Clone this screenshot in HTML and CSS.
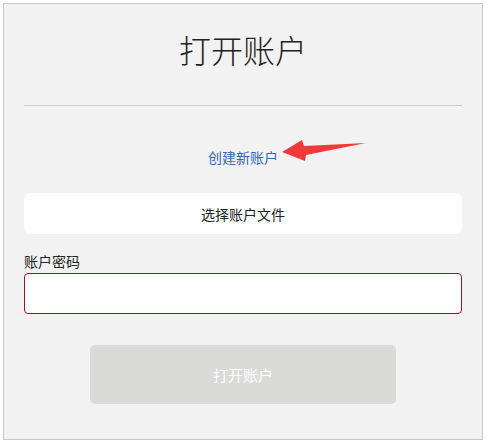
FILE: index.html
```html
<!DOCTYPE html>
<html lang="zh-CN">
<head>
  <meta charset="UTF-8" />
  <title>打开账户</title>
  <link rel="stylesheet" href="styles.css">
</head>
<body>
  <div class="panel">
    <h1 class="title">打开账户</h1>
    <hr class="divider">
    <div class="createRow">
      <a class="createLink" href="#">创建新账户</a>
      <svg class="arrow" width="90" height="26" viewBox="0 0 90 26">
        <polygon points="0,13 20,1 22,7 84,4 24,16 23,22" fill="#f03a3a" />
      </svg>
    </div>
    <button class="fileButton">选择账户文件</button>
    <label class="fieldLabel" for="password">账户密码</label>
    <input class="passwordInput" id="password" type="password">
    <button class="openButton" disabled>打开账户</button>
  </div>
</body>
</html>
```

FILE: styles.css
```css
body {
  margin: 3px;
  background-color: #ffffff;
  font-family: "Noto Sans CJK SC", "Liberation Sans", sans-serif;
}
.panel {
  width: 438px;
  height: 410px;
  padding: 25px 20px 0 20px;
  background-color: #f2f2f2;
  border: 1px solid #c8c8c8;
  display: flex;
  flex-direction: column;
}
.title {
  margin: 0;
  font-size: 32px;
  line-height: 40px;
  font-weight: 300;
  color: #222;
  text-align: center;
}
.divider {
  margin: 36px 0 0 0;
  border: none;
  border-top: 1px solid #cccccc;
  height: 0;
}
.createRow {
  position: relative;
  margin-top: 38px;
  height: 20px;
  text-align: center;
}
.createLink {
  font-size: 14px;
  line-height: 20px;
  color: #3468b0;
  text-decoration: none;
}
.arrow {
  position: absolute;
  left: 258px;
  top: -5px;
}
.fileButton {
  margin-top: 29px;
  height: 41px;
  border: none;
  border-radius: 6px;
  background-color: #ffffff;
  font-family: inherit;
  font-size: 14px;
  color: #222;
  cursor: pointer;
}
.fieldLabel {
  margin-top: 17px;
  font-size: 14px;
  line-height: 20px;
  color: #222;
}
.passwordInput {
  margin-top: 2px;
  height: 41px;
  box-sizing: border-box;
  border: 1px solid #8b1a2a;
  border-radius: 4px;
  background-color: #ffffff;
  outline: none;
}
.openButton {
  align-self: center;
  margin-top: 31px;
  width: 306px;
  height: 59px;
  border: none;
  border-radius: 5px;
  background-color: #dadad8;
  color: #ffffff;
  font-family: inherit;
  font-size: 15px;
}
```
